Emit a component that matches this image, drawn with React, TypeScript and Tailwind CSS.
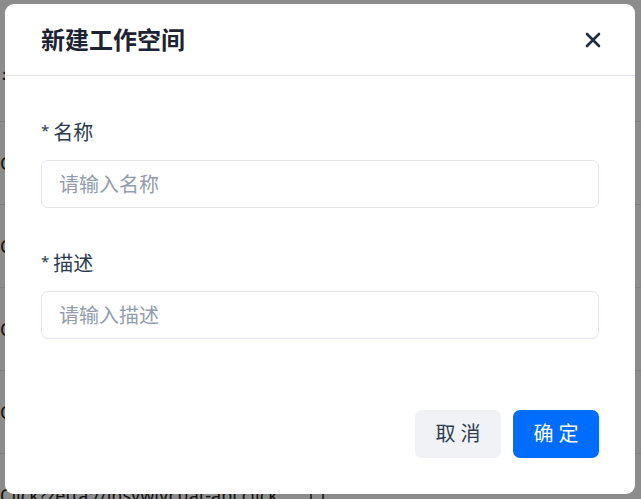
import { useState } from 'react'

const ROWS = [0, 1, 2, 3, 4]

function CloseIcon() {
  return (
    <svg width="16" height="16" viewBox="0 0 16 16" fill="none" aria-hidden="true">
      <path d="M2 2L14 14M14 2L2 14" stroke="#1f2d44" strokeWidth="2.6" strokeLinecap="round" />
    </svg>
  )
}

function Field({ label, placeholder }: { label: string; placeholder: string }) {
  const [value, setValue] = useState('')
  return (
    <div>
      <div className="flex h-[30px] items-center gap-[4px] text-[20px] leading-[30px] text-[#2b3a4f]">
        <span className="-mt-[6px] text-[15px] leading-none">*</span>
        <span>{label}</span>
      </div>
      <input
        className="mt-3 block h-[48px] w-full rounded-[7px] border border-[#e3e2ef] bg-white px-[17px] text-[20px] text-[#2b3a4f] outline-none placeholder:text-[#919cad]"
        placeholder={placeholder}
        aria-label={label}
        value={value}
        onChange={(e) => setValue(e.target.value)}
      />
    </div>
  )
}

export default function App() {
  return (
    <div
      className="relative h-[499px] w-full overflow-hidden bg-white"
      style={{ fontFamily: '"Noto Sans", "Noto Sans CJK SC", sans-serif' }}
    >
      {/* page behind the dialog */}
      <div className="flex flex-col">
        <div className="flex h-[122px] items-end border-b border-[#e6e6e6] pb-[32px] pl-[2px] text-[17px] font-semibold text-[#1e2a44]">
          名称
        </div>
        {ROWS.map((r) => (
          <div
            key={r}
            className="flex h-[83px] items-center border-b border-[#e6e6e6] text-[18px] text-[#222]"
          >
            Click?zetta://insywlyr.uat-api.click
            <span className="ml-[30px]">口</span>
          </div>
        ))}
      </div>

      <div className="absolute inset-0 flex items-start justify-start bg-black/45 pl-[5px] pt-[4px]" role="dialog" aria-modal="true">
        <div className="flex h-[490px] w-[630px] flex-col rounded-[9px] bg-white">
          <div className="flex h-[72px] items-center justify-between border-b border-[#e4e3ee] pl-[36px] pr-[32px]">
            <h3 className="text-[24px] font-bold leading-none text-[#1c2333]">新建工作空间</h3>
            <button type="button" className="flex h-[20px] w-[20px] items-center justify-center" aria-label="关闭">
              <CloseIcon />
            </button>
          </div>
          <div className="flex flex-1 flex-col px-[36px] pt-[42px]">
            <Field label="名称" placeholder="请输入名称" />
            <div className="h-[41px]" />
            <Field label="描述" placeholder="请输入描述" />
            <div className="mt-auto mb-[36px] flex justify-end gap-3">
              <button
                type="button"
                className="h-[48px] w-[86px] rounded-[7px] bg-[#f1f2f5] text-[20px] text-[#2e3d52]"
              >
                取 消
              </button>
              <button
                type="button"
                className="h-[48px] w-[86px] rounded-[7px] bg-[#006dff] text-[20px] text-white"
              >
                确 定
              </button>
            </div>
          </div>
        </div>
      </div>
    </div>
  )
}
